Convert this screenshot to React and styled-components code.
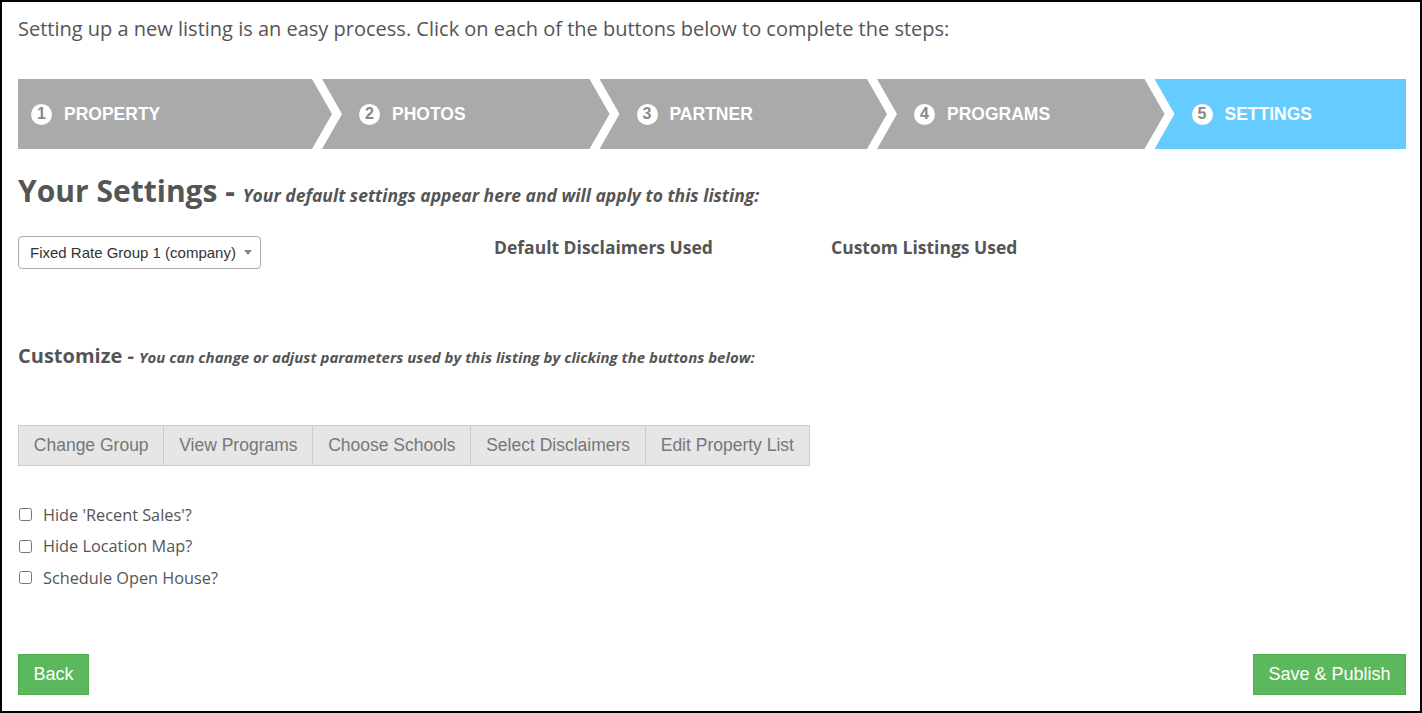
import React, { useState } from "react";
import styled, { createGlobalStyle } from "styled-components";

const GlobalStyle = createGlobalStyle`
  html, body {
    margin: 0;
    padding: 0;
    background: #fff;
  }
  * {
    box-sizing: border-box;
  }
`;

const steps = ["Property", "Photos", "Partner", "Programs", "Settings"];
const customizeButtons = [
  "Change Group",
  "View Programs",
  "Choose Schools",
  "Select Disclaimers",
  "Edit Property List",
];
const options = [
  { id: "sales", label: "Hide 'Recent Sales'?" },
  { id: "map", label: "Hide Location Map?" },
  { id: "openhouse", label: "Schedule Open House?" },
];

const App = () => {
  const [checked, setChecked] = useState({});

  const toggle = (id) => setChecked((c) => ({ ...c, [id]: !c[id] }));

  return (
    <Page>
      <GlobalStyle />
      <Intro>
        Setting up a new listing is an easy process. Click on each of the
        buttons below to complete the steps:
      </Intro>

      <StepBar>
        {steps.map((s, i) => (
          <Step
            key={s}
            $first={i === 0}
            $last={i === steps.length - 1}
            $active={i === steps.length - 1}
          >
            <StepNum>{i + 1}</StepNum>
            <StepLabel>{s}</StepLabel>
          </Step>
        ))}
      </StepBar>

      <Heading>
        Your Settings - <HeadingNote>Your default settings appear here and will apply to this listing:</HeadingNote>
      </Heading>

      <SettingsRow>
        <SelectBox>
          <span>Fixed Rate Group 1 (company)</span>
          <Caret />
        </SelectBox>
        <ColumnHead>Default Disclaimers Used</ColumnHead>
        <ColumnHead>Custom Listings Used</ColumnHead>
      </SettingsRow>

      <SubHeading>
        Customize - <SubHeadingNote>You can change or adjust parameters used by this listing by clicking the buttons below:</SubHeadingNote>
      </SubHeading>

      <ButtonGroup>
        {customizeButtons.map((b) => (
          <GroupButton key={b}>{b}</GroupButton>
        ))}
      </ButtonGroup>

      <CheckList>
        {options.map((o) => (
          <CheckRow key={o.id}>
            <input
              type="checkbox"
              checked={!!checked[o.id]}
              onChange={() => toggle(o.id)}
            />
            {o.label}
          </CheckRow>
        ))}
      </CheckList>

      <Footer>
        <GreenButton>Back</GreenButton>
        <GreenButton>Save &amp; Publish</GreenButton>
      </Footer>
    </Page>
  );
};

export default App;

// STYLED CSS

const Page = styled.div`
  height: 713px;
  border: 2px solid #000;
  padding: 14px 14px 16px 16px;
  display: flex;
  flex-direction: column;
  font-family: "Open Sans", sans-serif;
  color: #555;
`;

const Intro = styled.p`
  margin: 0;
  font-size: 20px;
  line-height: 26px;
  color: #555;
`;

const StepBar = styled.div`
  display: flex;
  margin-top: 37px;
  height: 70px;
`;

const Step = styled.div`
  flex: ${(p) => (p.$last ? "1 1 auto" : p.$first ? "0 0 314px" : "0 0 287.5px")};
  margin-left: ${(p) => (p.$first ? "0" : "-10px")};
  padding-left: ${(p) => (p.$first ? "13px" : "37px")};
  background: ${(p) => (p.$active ? "#66ccff" : "#aaaaaa")};
  display: flex;
  align-items: center;
  gap: 12px;
  clip-path: ${(p) =>
    p.$first
      ? "polygon(0 0, calc(100% - 20px) 0, 100% 50%, calc(100% - 20px) 100%, 0 100%)"
      : p.$last
      ? "polygon(0 0, 100% 0, 100% 100%, 0 100%, 20px 50%)"
      : "polygon(0 0, calc(100% - 20px) 0, 100% 50%, calc(100% - 20px) 100%, 0 100%, 20px 50%)"};
`;

const StepNum = styled.span`
  width: 21px;
  height: 21px;
  border-radius: 50%;
  background: #fff;
  color: #888;
  font-family: "Liberation Sans", Arial, sans-serif;
  font-weight: bold;
  font-size: 16px;
  display: flex;
  align-items: center;
  justify-content: center;
`;

const StepLabel = styled.span`
  color: #fff;
  font-family: "Liberation Sans", Arial, sans-serif;
  font-weight: bold;
  font-size: 17.5px;
  text-transform: uppercase;
`;

const Heading = styled.h2`
  margin: 23px 0 0;
  font-size: 30px;
  line-height: 38px;
  font-weight: 700;
  color: #555;
`;

const HeadingNote = styled.i`
  font-size: 17.5px;
  font-weight: 700;
  line-height: 1;
`;

const SettingsRow = styled.div`
  display: grid;
  grid-template-columns: 476px 337px 1fr;
  align-items: start;
  margin-top: 26px;
`;

const SelectBox = styled.div`
  width: 243px;
  height: 33px;
  border: 1px solid #aaa;
  border-radius: 4px;
  padding: 0 0 0 11px;
  display: flex;
  align-items: center;
  gap: 8px;
  font-family: "Liberation Sans", Arial, sans-serif;
  font-size: 15px;
  color: #333;
`;

const Caret = styled.span`
  width: 0;
  height: 0;
  border-left: 4px solid transparent;
  border-right: 4px solid transparent;
  border-top: 5px solid #888;
`;

const ColumnHead = styled.div`
  font-size: 17.5px;
  font-weight: 700;
  line-height: 22px;
  color: #555;
`;

const SubHeading = styled.h3`
  margin: 74px 0 0;
  font-size: 20px;
  line-height: 26px;
  font-weight: 700;
  color: #555;
`;

const SubHeadingNote = styled.i`
  font-size: 15px;
  font-weight: 700;
  line-height: 1;
`;

const ButtonGroup = styled.div`
  display: flex;
  margin-top: 56px;
`;

const GroupButton = styled.button`
  height: 41px;
  padding: 0 14.8px;
  background: #e6e6e6;
  border: 1px solid #ccc;
  margin-left: -1px;
  font-family: "Liberation Sans", Arial, sans-serif;
  font-size: 17.5px;
  color: #777;
  cursor: pointer;
  &:first-child {
    margin-left: 0;
  }
`;

const CheckList = styled.div`
  margin-top: 33px;
`;

const CheckRow = styled.label`
  display: flex;
  align-items: center;
  height: 31.5px;
  font-size: 16.3px;
  color: #555;
  cursor: pointer;

  input {
    width: 13px;
    height: 13px;
    margin: 0 11px 0 1px;
  }
`;

const Footer = styled.div`
  margin-top: auto;
  display: flex;
  justify-content: space-between;
`;

const GreenButton = styled.button`
  height: 41px;
  padding: 0 14.5px;
  background: #5cb85c;
  border: 1px solid #4cae4c;
  color: #fff;
  font-family: "Liberation Sans", Arial, sans-serif;
  font-size: 18px;
  cursor: pointer;
`;
